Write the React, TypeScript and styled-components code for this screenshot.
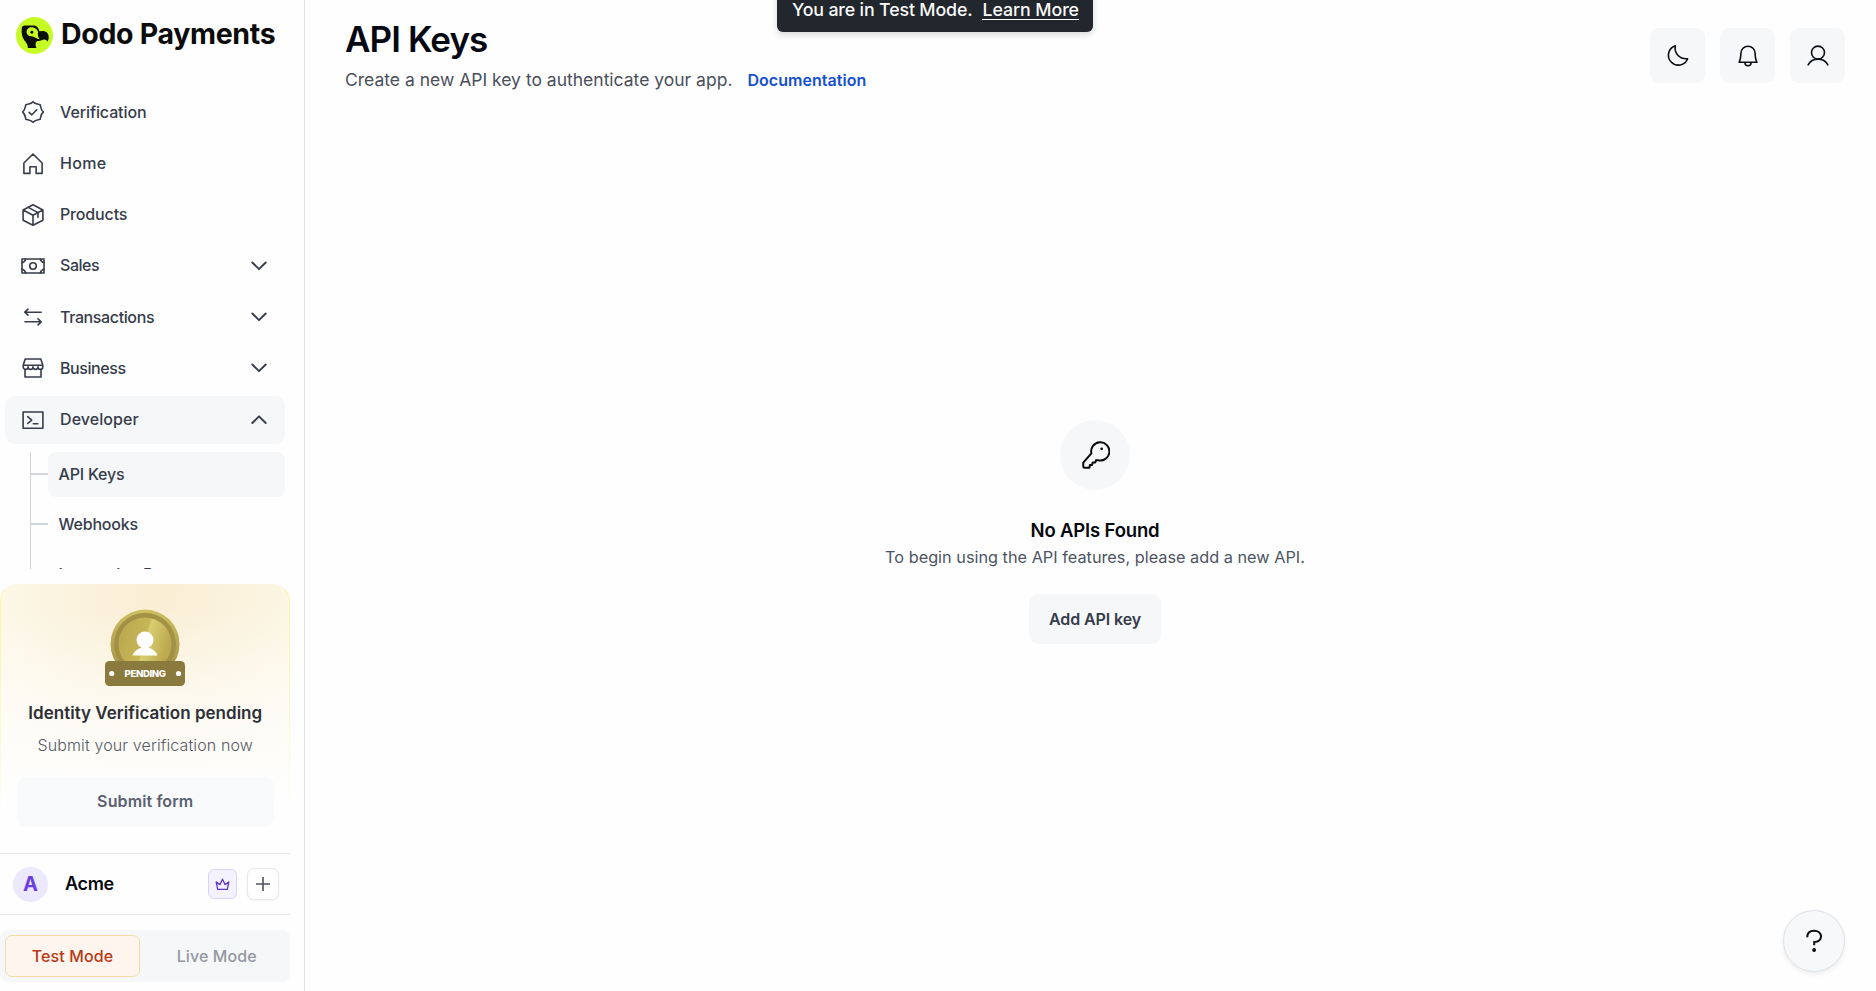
import React from "react";
import styled, { createGlobalStyle, css } from "styled-components";

const GlobalStyle = createGlobalStyle`
  *, *::before, *::after { box-sizing: border-box; }
  body { margin: 0; background: #fefefe; font-family: Inter, "Liberation Sans", sans-serif; color: #363c4a; }
  button { font: inherit; color: inherit; border: 0; padding: 0; cursor: pointer; }
  a { text-decoration: none; }
`;

/* ---------- layout ---------- */

const Page = styled.div`
  display: flex;
  height: 991px;
  overflow: hidden;
`;

const Sidebar = styled.aside`
  width: 305px;
  flex: none;
  display: flex;
  flex-direction: column;
  padding-right: 14.5px;
  border-right: 1px solid #e2e3e8;
`;

const Brand = styled.div`
  display: flex;
  align-items: center;
  gap: 8px;
  height: 88px;
  padding: 0 0 18px 16px;
  flex: none;
`;

const BrandName = styled.span`
  margin-top: -3px;
  font-size: 28.5px;
  font-weight: 700;
  letter-spacing: -0.32px;
  color: #0b0c0b;
  white-space: nowrap;
`;

const Nav = styled.nav`
  height: 481px;
  flex: none;
  overflow: hidden;
  display: flex;
  flex-direction: column;
  gap: 3.2px;
  padding: 0.4px 5px 0;
`;

const NavRow = styled.a<{ $active?: boolean }>`
  display: flex;
  align-items: center;
  flex: none;
  height: 48px;
  padding: 0 17.5px 0 15.5px;
  border-radius: 9px;
  background: ${(p) => (p.$active ? "#f5f7f9" : "transparent")};
  svg { flex: none; }
`;

const NavLabel = styled.span<{ $track: number }>`
  flex: 1;
  margin: -1px 0 0 15.5px;
  font-size: 16px;
  font-weight: 500;
  letter-spacing: ${(p) => p.$track}px;
`;

const SubNav = styled.div`
  display: flex;
  flex-direction: column;
  flex: none;
  gap: 5px;
  margin: 5px 0 0 25px;
  border-left: 1px solid #cfd2d9;
`;

const SubRow = styled.a`
  display: flex;
  align-items: center;
  height: 45px;
  font-size: 16px;
  font-weight: 500;
  letter-spacing: -0.2px;
  white-space: nowrap;
  &::before {
    content: "";
    width: 17px;
    height: 2px;
    background: #d3d6dc;
  }
`;

const SubLabel = styled.span<{ $active?: boolean }>`
  flex: 1;
  display: flex;
  align-items: center;
  height: 45px;
  padding-left: 10.5px;
  border-radius: 8px;
  background: ${(p) => (p.$active ? "#f5f7f9" : "transparent")};
`;

/* ---------- verification card ---------- */

const Card = styled.section`
  position: relative;
  margin-top: 15px;
  height: 253px;
  flex: none;
  display: flex;
  flex-direction: column;
  align-items: center;
  padding: 25px 16px 0 17px;
  border-radius: 17px 17px 0 0;
  background:
    linear-gradient(to bottom, rgba(254, 254, 254, 0) 10%, rgba(254, 254, 254, 0.65) 55%, #fefefe 86%),
    radial-gradient(ellipse 66% 100% at 54% 0%, #faeed4 0%, #fbf3de 50%, #fdfaec 100%);
  &::before {
    content: "";
    position: absolute;
    inset: 0;
    border: 1px solid #fcf6a4;
    border-top-color: transparent;
    border-bottom: 0;
    border-radius: inherit;
    mask-image: linear-gradient(to bottom, #000 15%, transparent 95%);
  }
`;

const CardTitle = styled.h2`
  margin: 15px 0 0;
  font-size: 17px;
  line-height: 24px;
  font-weight: 600;
  letter-spacing: 0.02px;
  color: #2c2f38;
  white-space: nowrap;
`;

const CardText = styled.p`
  margin: 8px 0 0;
  font-size: 16px;
  line-height: 24px;
  font-weight: 300;
  letter-spacing: 0.12px;
  color: #555964;
  white-space: nowrap;
`;

const SubmitButton = styled.button`
  margin-top: 20px;
  width: 257px;
  height: 50px;
  padding-bottom: 2px;
  border-radius: 9px;
  background: #f8fafc;
  color: #5b6070;
  font-size: 16px;
  font-weight: 600;
  letter-spacing: 0.12px;
`;

/* ---------- account & mode ---------- */

const Account = styled.div`
  display: flex;
  align-items: center;
  height: 62px;
  margin-top: 16px;
  flex: none;
  padding: 0 10.5px 0 13px;
  border-top: 1px solid #e3e4e8;
  border-bottom: 1px solid #e3e4e8;
`;

const Avatar = styled.span`
  display: grid;
  place-items: center;
  width: 35px;
  height: 35px;
  border-radius: 50%;
  background: #ece9fd;
  color: #6b3fe0;
  font-size: 20px;
  font-weight: 700;
`;

const AccountName = styled.span`
  flex: 1;
  margin: -1px 0 0 17px;
  font-size: 18px;
  font-weight: 600;
  letter-spacing: -0.3px;
  color: #07090f;
`;

const SmallButton = styled.button<{ $tone: "violet" | "plain" }>`
  display: grid;
  place-items: center;
  ${(p) =>
    p.$tone === "violet"
      ? css`
          width: 29px;
          height: 30px;
          border-radius: 6px;
          border: 1px solid #dad3fb;
          background: #f4f2fe;
          color: #6038d0;
        `
      : css`
          width: 32px;
          height: 32px;
          margin-left: 10px;
          border-radius: 7px;
          border: 1px solid #e6e7ea;
          background: #fefefe;
          color: #4d515a;
          box-shadow: 0 1px 2px rgba(0, 0, 0, 0.05);
        `}
`;

const ModeSwitch = styled.div`
  display: flex;
  flex: none;
  height: 52px;
  margin-top: 15px;
  padding: 5px;
  border-radius: 8px;
  background: #f5f7f9;
`;

const Mode = styled.button<{ $on?: boolean }>`
  width: ${(p) => (p.$on ? "135px" : "auto")};
  flex: ${(p) => (p.$on ? "none" : "1")};
  padding-left: ${(p) => (p.$on ? "0" : "9px")};
  border-radius: 7px;
  border: 1px solid ${(p) => (p.$on ? "#f6dba6" : "transparent")};
  background: ${(p) => (p.$on ? "#fef6ee" : "transparent")};
  color: ${(p) => (p.$on ? "#b93815" : "#9497a0")};
  font-size: 16px;
  font-weight: 500;
  letter-spacing: 0.1px;
`;

/* ---------- main ---------- */

const Main = styled.main`
  flex: 1;
  display: flex;
  flex-direction: column;
  padding: 0 31px 0 40px;
`;

const Header = styled.header`
  display: flex;
  justify-content: space-between;
  height: 100px;
  flex: none;
`;

const Title = styled.h1`
  margin: 16px 0 0;
  font-size: 35px;
  line-height: 46px;
  font-weight: 600;
  letter-spacing: -0.9px;
  color: #050812;
  white-space: nowrap;
`;

const Subtitle = styled.p`
  display: flex;
  align-items: center;
  gap: 15px;
  margin: 5px 0 0;
  font-size: 17.5px;
  line-height: 26px;
  color: #4a4f5b;
  white-space: nowrap;
`;

const DocLink = styled.a`
  font-size: 16px;
  font-weight: 600;
  letter-spacing: 0.05px;
  color: #1450d0;
`;

const Actions = styled.div`
  display: flex;
  gap: 15px;
  padding-top: 28px;
`;

const IconButton = styled.button`
  display: grid;
  place-items: center;
  width: 55px;
  height: 55px;
  border-radius: 9px;
  background: #f5f7f9;
  color: #0b0e15;
`;

const Empty = styled.section`
  display: flex;
  flex-direction: column;
  align-items: center;
  padding-top: 320px;
`;

const KeyCircle = styled.div`
  display: grid;
  place-items: center;
  width: 70px;
  height: 70px;
  border-radius: 50%;
  background: #f5f7f9;
  color: #0a0a0c;
`;

const EmptyTitle = styled.h2`
  margin: 27px 0 0;
  font-size: 18.5px;
  line-height: 26px;
  font-weight: 600;
  letter-spacing: -0.17px;
  color: #07090f;
`;

const EmptyText = styled.p`
  margin: 1px 0 0;
  font-size: 16.3px;
  line-height: 26px;
  color: #4e5463;
`;

const AddButton = styled.button`
  margin-top: 24px;
  width: 132px;
  height: 50px;
  border-radius: 9px;
  background: #f5f7f9;
  color: #363c4a;
  font-size: 16px;
  font-weight: 600;
  letter-spacing: -0.1px;
`;

const Toast = styled.div`
  position: absolute;
  top: -20px;
  left: 777px;
  width: 316px;
  height: 52px;
  display: flex;
  gap: 10px;
  padding: 18px 0 0 15px;
  border-radius: 6px;
  background: #22262d;
  box-shadow: 0 3px 6px rgba(20, 24, 32, 0.16);
  color: #fafafa;
  font-size: 17.8px;
  line-height: 24px;
  font-weight: 500;
  letter-spacing: -0.15px;
  white-space: nowrap;
`;

const ToastLink = styled.a`
  height: 22px;
  letter-spacing: -0.07px;
  border-bottom: 1px solid #fafafa;
`;

const Help = styled.button`
  position: absolute;
  left: 1783px;
  top: 910px;
  width: 62px;
  height: 62px;
  display: grid;
  place-items: center;
  border-radius: 50%;
  border: 1px solid #dfe2e6;
  background: #f6f8fa;
  color: #0a0c12;
  box-shadow: 0 2px 5px rgba(0, 0, 0, 0.07);
`;

/* ---------- drawings ---------- */

const Icon = ({ size = 24, sw = 1.6, children }: { size?: number; sw?: number; children: React.ReactNode }) => (
  <svg width={size} height={size} viewBox="0 0 24 24" fill="none" stroke="currentColor" strokeWidth={sw} strokeLinecap="round" strokeLinejoin="round">
    {children}
  </svg>
);

const SealIcon = () => (
  <Icon>
    <path d="M12 1.800C13.600 3.900 15.800 3.900 19.200 4.800C20 8.200 20.100 10.300 22.300 12C20.100 13.700 20 15.800 19.200 19.200C15.800 20.100 13.600 20.100 12 22.200C10.400 20.100 8.200 20.100 4.800 19.200C4 15.800 3.900 13.700 1.700 12C3.900 10.300 4 8.200 4.800 4.800C8.200 3.900 10.400 3.900 12 1.800Z" />
    <path d="m8.100 12.400 2.700 2.400 5-5" />
  </Icon>
);
const HomeIcon = () => (
  <Icon>
    <path d="M2.900 21.400V11L12 2l9.100 9v10.400h-6v-6.600H8.900v6.600Z" />
  </Icon>
);
const BoxIcon = () => (
  <Icon>
    <path d="M12 1.800 21.900 7v10.200L12 22.300 2.100 17.200V7ZM2.100 7 12 12.200 21.900 7M12 12.200v10.100M7.200 4.400l9.800 5.200v4.600" />
  </Icon>
);
const MoneyIcon = () => (
  <Icon>
    <path d="M1 5h22v14H1Z" />
    <circle cx="12" cy="12" r="3.300" />
    <path d="M1 8.700A5 5 0 0 0 4.700 5M1 15.300A5 5 0 0 1 4.700 19M23 8.700A5 5 0 0 1 19.300 5M23 15.300a5 5 0 0 0-3.700 3.700" />
  </Icon>
);
const SwapIcon = () => (
  <Icon>
    <path d="M20.200 7.200H4M7 4.200 3.800 7.200 7 10.200M4 16.800h16.200M17 13.800l3.200 3-3.200 3" />
  </Icon>
);
const ShopIcon = () => (
  <Icon>
    <path d="M4.200 3h15.600l2 6.300v1.600a2.450 2.450 0 0 1-4.900 0 2.450 2.450 0 0 1-4.900 0 2.450 2.450 0 0 1-4.900 0 2.450 2.450 0 0 1-4.900 0V9.300ZM2.200 9.300h19.600M4 13.300V21h16v-7.700" />
  </Icon>
);
const TerminalIcon = () => (
  <Icon>
    <path d="M2.100 4h19.800v16.200H2.100ZM6.700 8.700l4 3.400-4 3.400M12.300 15.700h4.600" />
  </Icon>
);
const Chevron = ({ up }: { up?: boolean }) => (
  <svg width="16" height="10" viewBox="0 0 16 10" fill="none" stroke="currentColor" strokeWidth="1.900" strokeLinecap="round" strokeLinejoin="round">
    <path d={up ? "M1.300 8 8 1.300l6.700 6.700" : "M1.300 1.500 8 8.200l6.700-6.700"} />
  </svg>
);
const MoonIcon = () => (
  <Icon sw={1.6}>
    <path d="M9.300 1.800A9.900 9.900 0 1 0 21.600 14.700C14 15.500 8 9.600 9.300 1.800Z" />
  </Icon>
);
const BellIcon = () => (
  <Icon sw={1.6}>
    <path d="M3.100 18.300C4.700 15.500 4.800 12.500 4.900 9.300a7.100 7.100 0 0 1 14.200 0c.1 3.200.2 6.200 1.800 9ZM8.900 18.500a3.100 3.300 0 0 0 6.200 0" />
  </Icon>
);
const UserIcon = () => (
  <Icon sw={1.6}>
    <circle cx="12" cy="8.600" r="6.500" />
    <path d="M2.100 20.900c2-3.700 5.700-5.800 9.900-5.800s7.900 2.100 9.900 5.800" />
  </Icon>
);
const KeyIcon = () => (
  <Icon size={30} sw={1.6}>
    <path d="M9.100 10.700a7.300 7.300 0 1 1 5.300 5.500l-1.500-.1-.7 1.800h-2l-.6 2.100H7.900l-.3 2.100H3.800a1.200 1.200 0 0 1-1.200-1.200v-2.800Z" />
    <circle cx="17.300" cy="7" r="1.100" fill="currentColor" stroke="none" />
  </Icon>
);
const CrownIcon = () => (
  <svg width="15" height="13" viewBox="0 0 15 13" fill="none" stroke="currentColor" strokeWidth="1.300" strokeLinejoin="round">
    <path d="M2.700 11.300 1.200 4l3.700 2.600L7.500 1.300l2.600 5.300L13.800 4l-1.500 7.300Z" />
  </svg>
);
const PlusIcon = () => (
  <svg width="16" height="16" viewBox="0 0 16 16" stroke="currentColor" strokeWidth="1.600">
    <path d="M8 1v14M1 8h14" />
  </svg>
);
const HelpIcon = () => (
  <svg width="18" height="24" viewBox="0 0 18 24" fill="none" stroke="currentColor" strokeWidth="2">
    <path d="M2.200 8.300C2.200 4 5 1.700 9 1.700s7 2.200 7 5.700c0 3.800-3.500 5.300-6.800 5.700v3.200" />
    <circle cx="9.100" cy="21" r="1.900" fill="currentColor" stroke="none" />
  </svg>
);

const DodoLogo = () => (
  <svg width="37" height="37" viewBox="0 0 112 112">
    <circle cx="56" cy="56" r="56" fill="#c7fb24" />
    <path fill="#0b0f07" d="M18 30Q22 26 28 26H54C63 27 69 33 71 43L82 42C94 43 100 51 99 65L96 74C92 70 88 67 82 69C76 71 70 73 64 73C58 77 58 86 62 94H36C36 84 31 77 25 70C18 60 15 45 18 30Z" />
    <path fill="#c7fb24" d="M32 47C31 36 40 30 50 31C60 33 65 39 67 46C65 53 66 61 72 67C62 66 56 60 49 58C40 60 34 55 32 47Z" />
    <circle cx="48" cy="46" r="4.500" fill="#0b0f07" />
  </svg>
);

const BadgeSvg = styled.svg`
  position: relative;
  flex: none;
`;
const PendingBadge = () => (
  <BadgeSvg width="80" height="77" viewBox="0 0 80 77">
    <defs>
      <linearGradient id="rim" x1="0" y1="0" x2="0" y2="1">
        <stop offset="0" stopColor="#cdbf62" />
        <stop offset="1" stopColor="#a08d42" />
      </linearGradient>
      <linearGradient id="face" x1="0" y1="0" x2="1" y2="0.3">
        <stop offset="0" stopColor="#baa64e" />
        <stop offset="0.56" stopColor="#c6b657" />
        <stop offset="0.6" stopColor="#d9ce70" />
        <stop offset="1" stopColor="#bda950" />
      </linearGradient>
    </defs>
    <circle cx="40" cy="35" r="34.500" fill="url(#rim)" />
    <circle cx="40" cy="35" r="31" fill="#a39146" />
    <circle cx="40" cy="35" r="26.500" fill="url(#face)" />
    <circle cx="40" cy="31" r="8.500" fill="#fff" />
    <path d="M27.500 46.500c2-5 6-7 9-8h7c3 1 7 3 9 8Z" fill="#fff" />
    <rect y="52" width="80" height="25" rx="4.500" fill="#8b7a3d" />
    <circle cx="6.700" cy="64.500" r="2.600" fill="#fff" />
    <circle cx="73.500" cy="64.500" r="2.600" fill="#fff" />
    <text x="40.300" y="68" textAnchor="middle" textLength="41.500" fontFamily="Inter, sans-serif" fontSize="9.600" fontWeight="800" fill="#fff">PENDING</text>
  </BadgeSvg>
);

const items = [
  { label: "Verification", icon: <SealIcon />, track: -0.1 },
  { label: "Home", icon: <HomeIcon />, track: 0.3 },
  { label: "Products", icon: <BoxIcon />, track: -0.15 },
  { label: "Sales", icon: <MoneyIcon />, track: -0.45, more: true },
  { label: "Transactions", icon: <SwapIcon />, track: -0.38, more: true },
  { label: "Business", icon: <ShopIcon />, track: -0.42, more: true },
  { label: "Developer", icon: <TerminalIcon />, track: 0.08, more: true, open: true },
];

const subItems = ["API Keys", "Webhooks", "Integration Resources"];

export default function App() {
  return (
    <Page>
      <GlobalStyle />
      <Sidebar>
        <Brand>
          <DodoLogo />
          <BrandName>Dodo Payments</BrandName>
        </Brand>
        <Nav>
          {items.map((it) => (
            <NavRow key={it.label} $active={it.open}>
              {it.icon}
              <NavLabel $track={it.track}>{it.label}</NavLabel>
              {it.more && <Chevron up={it.open} />}
            </NavRow>
          ))}
          <SubNav>
            {subItems.map((label, i) => (
              <SubRow key={label}>
                <SubLabel $active={i === 0}>{label}</SubLabel>
              </SubRow>
            ))}
          </SubNav>
        </Nav>
        <Card>
          <PendingBadge />
          <CardTitle>Identity Verification pending</CardTitle>
          <CardText>Submit your verification now</CardText>
          <SubmitButton>Submit form</SubmitButton>
        </Card>
        <Account>
          <Avatar>A</Avatar>
          <AccountName>Acme</AccountName>
          <SmallButton $tone="violet" aria-label="Upgrade"><CrownIcon /></SmallButton>
          <SmallButton $tone="plain" aria-label="Add business"><PlusIcon /></SmallButton>
        </Account>
        <ModeSwitch>
          <Mode $on>Test Mode</Mode>
          <Mode>Live Mode</Mode>
        </ModeSwitch>
      </Sidebar>
      <Main>
        <Header>
          <div>
            <Title>API Keys</Title>
            <Subtitle>
              <span>Create a new API key to authenticate your app.</span>
              <DocLink>Documentation</DocLink>
            </Subtitle>
          </div>
          <Actions>
            <IconButton aria-label="Theme"><MoonIcon /></IconButton>
            <IconButton aria-label="Notifications"><BellIcon /></IconButton>
            <IconButton aria-label="Profile"><UserIcon /></IconButton>
          </Actions>
        </Header>
        <Empty>
          <KeyCircle><KeyIcon /></KeyCircle>
          <EmptyTitle>No APIs Found</EmptyTitle>
          <EmptyText>To begin using the API features, please add a new API.</EmptyText>
          <AddButton>Add API key</AddButton>
        </Empty>
      </Main>
      <Toast>
        <span>You are in Test Mode.</span>
        <ToastLink>Learn More</ToastLink>
      </Toast>
      <Help aria-label="Help"><HelpIcon /></Help>
    </Page>
  );
}
